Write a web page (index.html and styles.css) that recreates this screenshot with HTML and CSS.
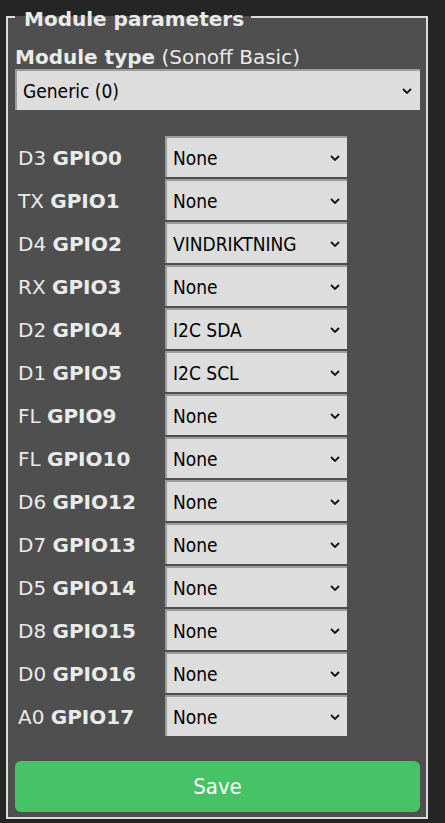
FILE: index.html
```html
<!DOCTYPE html>
<html>
<head>
<meta charset="utf-8">
<link rel="stylesheet" href="styles.css">
</head>
<body>
<div class="page">
  <fieldset class="panel">
    <legend class="panel-title">Module parameters</legend>
    <div class="mtype"><b>Module type</b> (Sonoff Basic)</div>
    <div class="sel sel-wide"><span>Generic (0)</span><svg class="chev" viewBox="0 0 10 6" width="10" height="6"><path d="M1 1 L5 5 L9 1" fill="none" stroke="#111" stroke-width="1.8"/></svg></div>
    <div class="gpios">
      <div class="row"><div class="lbl">D3 <b>GPIO0</b></div><div class="sel"><span>None</span><svg class="chev" viewBox="0 0 10 6" width="10" height="6"><path d="M1 1 L5 5 L9 1" fill="none" stroke="#111" stroke-width="1.8"/></svg></div></div>
      <div class="row"><div class="lbl">TX <b>GPIO1</b></div><div class="sel"><span>None</span><svg class="chev" viewBox="0 0 10 6" width="10" height="6"><path d="M1 1 L5 5 L9 1" fill="none" stroke="#111" stroke-width="1.8"/></svg></div></div>
      <div class="row"><div class="lbl">D4 <b>GPIO2</b></div><div class="sel"><span>VINDRIKTNING</span><svg class="chev" viewBox="0 0 10 6" width="10" height="6"><path d="M1 1 L5 5 L9 1" fill="none" stroke="#111" stroke-width="1.8"/></svg></div></div>
      <div class="row"><div class="lbl">RX <b>GPIO3</b></div><div class="sel"><span>None</span><svg class="chev" viewBox="0 0 10 6" width="10" height="6"><path d="M1 1 L5 5 L9 1" fill="none" stroke="#111" stroke-width="1.8"/></svg></div></div>
      <div class="row"><div class="lbl">D2 <b>GPIO4</b></div><div class="sel"><span>I2C SDA</span><svg class="chev" viewBox="0 0 10 6" width="10" height="6"><path d="M1 1 L5 5 L9 1" fill="none" stroke="#111" stroke-width="1.8"/></svg></div></div>
      <div class="row"><div class="lbl">D1 <b>GPIO5</b></div><div class="sel"><span>I2C SCL</span><svg class="chev" viewBox="0 0 10 6" width="10" height="6"><path d="M1 1 L5 5 L9 1" fill="none" stroke="#111" stroke-width="1.8"/></svg></div></div>
      <div class="row"><div class="lbl">FL <b>GPIO9</b></div><div class="sel"><span>None</span><svg class="chev" viewBox="0 0 10 6" width="10" height="6"><path d="M1 1 L5 5 L9 1" fill="none" stroke="#111" stroke-width="1.8"/></svg></div></div>
      <div class="row"><div class="lbl">FL <b>GPIO10</b></div><div class="sel"><span>None</span><svg class="chev" viewBox="0 0 10 6" width="10" height="6"><path d="M1 1 L5 5 L9 1" fill="none" stroke="#111" stroke-width="1.8"/></svg></div></div>
      <div class="row"><div class="lbl">D6 <b>GPIO12</b></div><div class="sel"><span>None</span><svg class="chev" viewBox="0 0 10 6" width="10" height="6"><path d="M1 1 L5 5 L9 1" fill="none" stroke="#111" stroke-width="1.8"/></svg></div></div>
      <div class="row"><div class="lbl">D7 <b>GPIO13</b></div><div class="sel"><span>None</span><svg class="chev" viewBox="0 0 10 6" width="10" height="6"><path d="M1 1 L5 5 L9 1" fill="none" stroke="#111" stroke-width="1.8"/></svg></div></div>
      <div class="row"><div class="lbl">D5 <b>GPIO14</b></div><div class="sel"><span>None</span><svg class="chev" viewBox="0 0 10 6" width="10" height="6"><path d="M1 1 L5 5 L9 1" fill="none" stroke="#111" stroke-width="1.8"/></svg></div></div>
      <div class="row"><div class="lbl">D8 <b>GPIO15</b></div><div class="sel"><span>None</span><svg class="chev" viewBox="0 0 10 6" width="10" height="6"><path d="M1 1 L5 5 L9 1" fill="none" stroke="#111" stroke-width="1.8"/></svg></div></div>
      <div class="row"><div class="lbl">D0 <b>GPIO16</b></div><div class="sel"><span>None</span><svg class="chev" viewBox="0 0 10 6" width="10" height="6"><path d="M1 1 L5 5 L9 1" fill="none" stroke="#111" stroke-width="1.8"/></svg></div></div>
      <div class="row"><div class="lbl">A0 <b>GPIO17</b></div><div class="sel"><span>None</span><svg class="chev" viewBox="0 0 10 6" width="10" height="6"><path d="M1 1 L5 5 L9 1" fill="none" stroke="#111" stroke-width="1.8"/></svg></div></div>
    </div>
    <button class="save">Save</button>
  </fieldset>
</div>
</body>
</html>
```

FILE: styles.css
```css
html, body {
  margin: 0;
  padding: 0;
  background: #252525;
}
body {
  font-family: "DejaVu Sans", Verdana, sans-serif;
  font-size: 20px;
  color: #eaeaea;
}
.page {
  padding: 2px 17px 0 6px;
}
.panel {
  margin: 0;
  padding: 2px 6px 5px 7px;
  background: #4f4f4f;
  border: 2px solid #dcdcdc;
  min-width: 0;
}
.panel-title {
  font-weight: bold;
  font-size: 20px;
  padding: 6px 7px 0 9px;
  margin-left: 0;
  line-height: 23px;
}
.mtype {
  font-size: 20px;
  line-height: 23px;
  height: 23px;
  margin-top: 13px;
  white-space: nowrap;
}
.sel {
  box-sizing: border-box;
  height: 41px;
  background: #dddddd;
  color: #000;
  border-style: solid;
  border-width: 2px 0 0 2px;
  border-color: #9c9c9c;
  display: flex;
  align-items: center;
  justify-content: space-between;
  padding: 0 7px 0 6px;
  font-family: "DejaVu Sans Condensed", "DejaVu Sans", Tahoma, sans-serif;
  font-size: 19px;
}
.sel span {
  white-space: nowrap;
}
.sel-wide {
  padding-right: 8px;
}
.chev {
  flex: none;
  margin-top: 1px;
}
.gpios {
  margin-top: 26px;
  display: flex;
  flex-direction: column;
  gap: 2px;
}
.row {
  display: grid;
  grid-template-columns: 150px 182px;
  align-items: center;
}
.lbl {
  padding-left: 3px;
  white-space: nowrap;
  font-size: 20px;
  padding-top: 2px;
}
.save {
  display: block;
  width: 100%;
  margin-top: 25px;
  height: 51px;
  border: 0;
  border-radius: 6px;
  background: #47c266;
  color: #faffff;
  font-family: "DejaVu Sans Condensed", "DejaVu Sans", Tahoma, sans-serif;
  font-size: 22px;
  padding: 0;
}
```
